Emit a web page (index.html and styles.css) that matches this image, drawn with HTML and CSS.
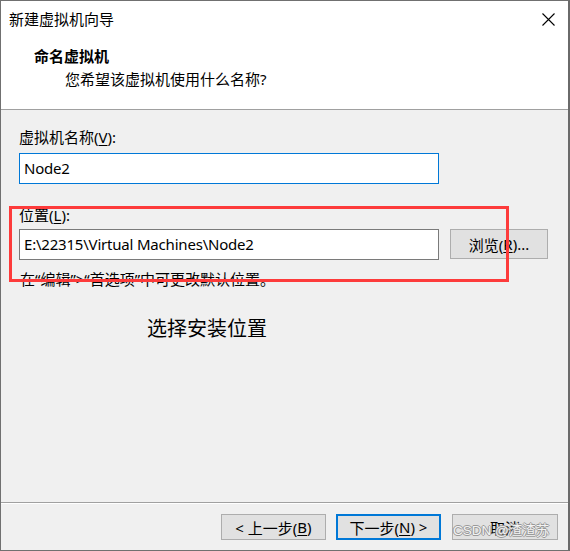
FILE: index.html
```html
<!DOCTYPE html>
<html lang="zh-CN">
<head>
<meta charset="utf-8">
<title>新建虚拟机向导</title>
<link rel="stylesheet" href="styles.css">
</head>
<body>
<div class="window">
  <div class="header">
    <div class="titlebar">
      <span class="title">新建虚拟机向导</span>
      <svg class="close" width="13" height="13" viewBox="0 0 13 13"><path d="M0.5 0.5 L12.5 12.5 M12.5 0.5 L0.5 12.5" stroke="#000" stroke-width="1.1" fill="none"/></svg>
    </div>
    <div class="heading">命名虚拟机</div>
    <div class="subheading">您希望该虚拟机使用什么名称?</div>
  </div>
  <div class="content">
    <div class="label label-name">虚拟机名称(<u>V</u>):</div>
    <div class="field field-focus">Node2</div>
    <div class="label label-loc">位置(<u>L</u>):</div>
    <div class="row">
      <div class="field field-path">E:\22315\Virtual Machines\Node2</div>
      <div class="btn btn-browse">浏览(<u>R</u>)...</div>
    </div>
    <div class="hint">在“编辑”&gt;“首选项”中可更改默认位置。</div>
    <div class="note">选择安装位置</div>
  </div>
  <div class="footer">
    <div class="btn btn-foot">&lt; 上一步(<u>B</u>)</div>
    <div class="btn btn-foot btn-default">下一步(<u>N</u>) &gt;</div>
    <div class="btn btn-foot btn-cancel">取消</div>
  </div>
  <div class="annot"></div>
  <div class="watermark">CSDN @渣渣苏</div>
</div>
</body>
</html>
```

FILE: styles.css
```css
html, body {
  margin: 0;
  padding: 0;
  background: #f0f0f0;
}
body {
  font-family: "Noto Sans", "Noto Sans CJK SC", sans-serif;
  font-size: 15px;
  color: #000;
}
.window {
  position: relative;
  width: 570px;
  height: 551px;
  box-sizing: border-box;
  border-top: 1px solid #707070;
  border-left: 1px solid #707070;
  border-right: 2px solid #6a6a6a;
  border-bottom: 1px solid #707070;
  background: #f0f0f0;
  display: flex;
  flex-direction: column;
  overflow: hidden;
}
.header {
  background: #fff;
  height: 109px;
  box-sizing: border-box;
  border-bottom: 1px solid #a0a0a0;
  padding-top: 8px;
  flex: none;
}
.titlebar {
  display: flex;
  justify-content: space-between;
  align-items: center;
  height: 20px;
  line-height: 20px;
  padding-left: 8px;
  padding-right: 13px;
}
.title {
  font-size: 15px;
}
.close {
  display: block;
}
.heading {
  margin-top: 17px;
  margin-left: 33px;
  line-height: 20px;
  font-weight: bold;
}
.subheading {
  margin-top: 3px;
  margin-left: 64px;
  line-height: 20px;
}
.content {
  flex: 1;
  padding-left: 18px;
  padding-top: 17px;
  box-sizing: border-box;
}
.label {
  line-height: 20px;
}
.label-loc {
  margin-top: 21px;
}
.field {
  box-sizing: border-box;
  width: 420px;
  height: 31px;
  background: #fff;
  border: 1px solid #7a7a7a;
  padding: 3px 4px 0;
  line-height: 22px;
  white-space: nowrap;
  letter-spacing: -0.2px;
}
.field-focus {
  margin-top: 6px;
  border-color: #0078d7;
}
.row {
  display: flex;
  align-items: flex-start;
  gap: 11px;
  margin-top: 4px;
}
.btn {
  box-sizing: border-box;
  background: #e1e1e1;
  border: 1px solid #adadad;
  display: flex;
  align-items: center;
  justify-content: center;
  white-space: nowrap;
}
.btn-browse {
  width: 98px;
  height: 30px;
}
.hint {
  margin-top: 9px;
  margin-left: 1px;
  line-height: 20px;
}
.note {
  margin-top: 26px;
  margin-left: 128px;
  font-size: 20px;
  line-height: 28px;
}
.footer {
  flex: none;
  height: 48px;
  box-sizing: border-box;
  border-top: 1px solid #a0a0a0;
  box-shadow: inset 0 1px 0 #ffffff;
  display: flex;
  justify-content: flex-end;
  align-items: flex-start;
  gap: 10px;
  padding-top: 11px;
  padding-right: 10px;
}
.btn-foot {
  width: 105px;
  height: 26px;
}
.btn-default {
  border: 2px solid #0078d7;
}
.btn-cancel {
  width: 106px;
  margin-left: 1px;
}
.annot {
  position: absolute;
  left: 8px;
  top: 205px;
  width: 500px;
  height: 76px;
  box-sizing: border-box;
  border: 3px solid #fd3b3b;
}
.watermark {
  position: absolute;
  left: 452px;
  top: 520px;
  font-family: "Liberation Sans", "Noto Sans CJK SC", sans-serif;
  font-size: 13.5px;
  line-height: 20px;
  color: rgba(255, 255, 255, 0.9);
  text-shadow: 1px 0 0 #9a9a9a, -1px 0 0 #9a9a9a, 0 1px 0 #9a9a9a, 0 -1px 0 #9a9a9a;
}
u {
  text-decoration: underline;
  text-underline-offset: 2px;
}
```
